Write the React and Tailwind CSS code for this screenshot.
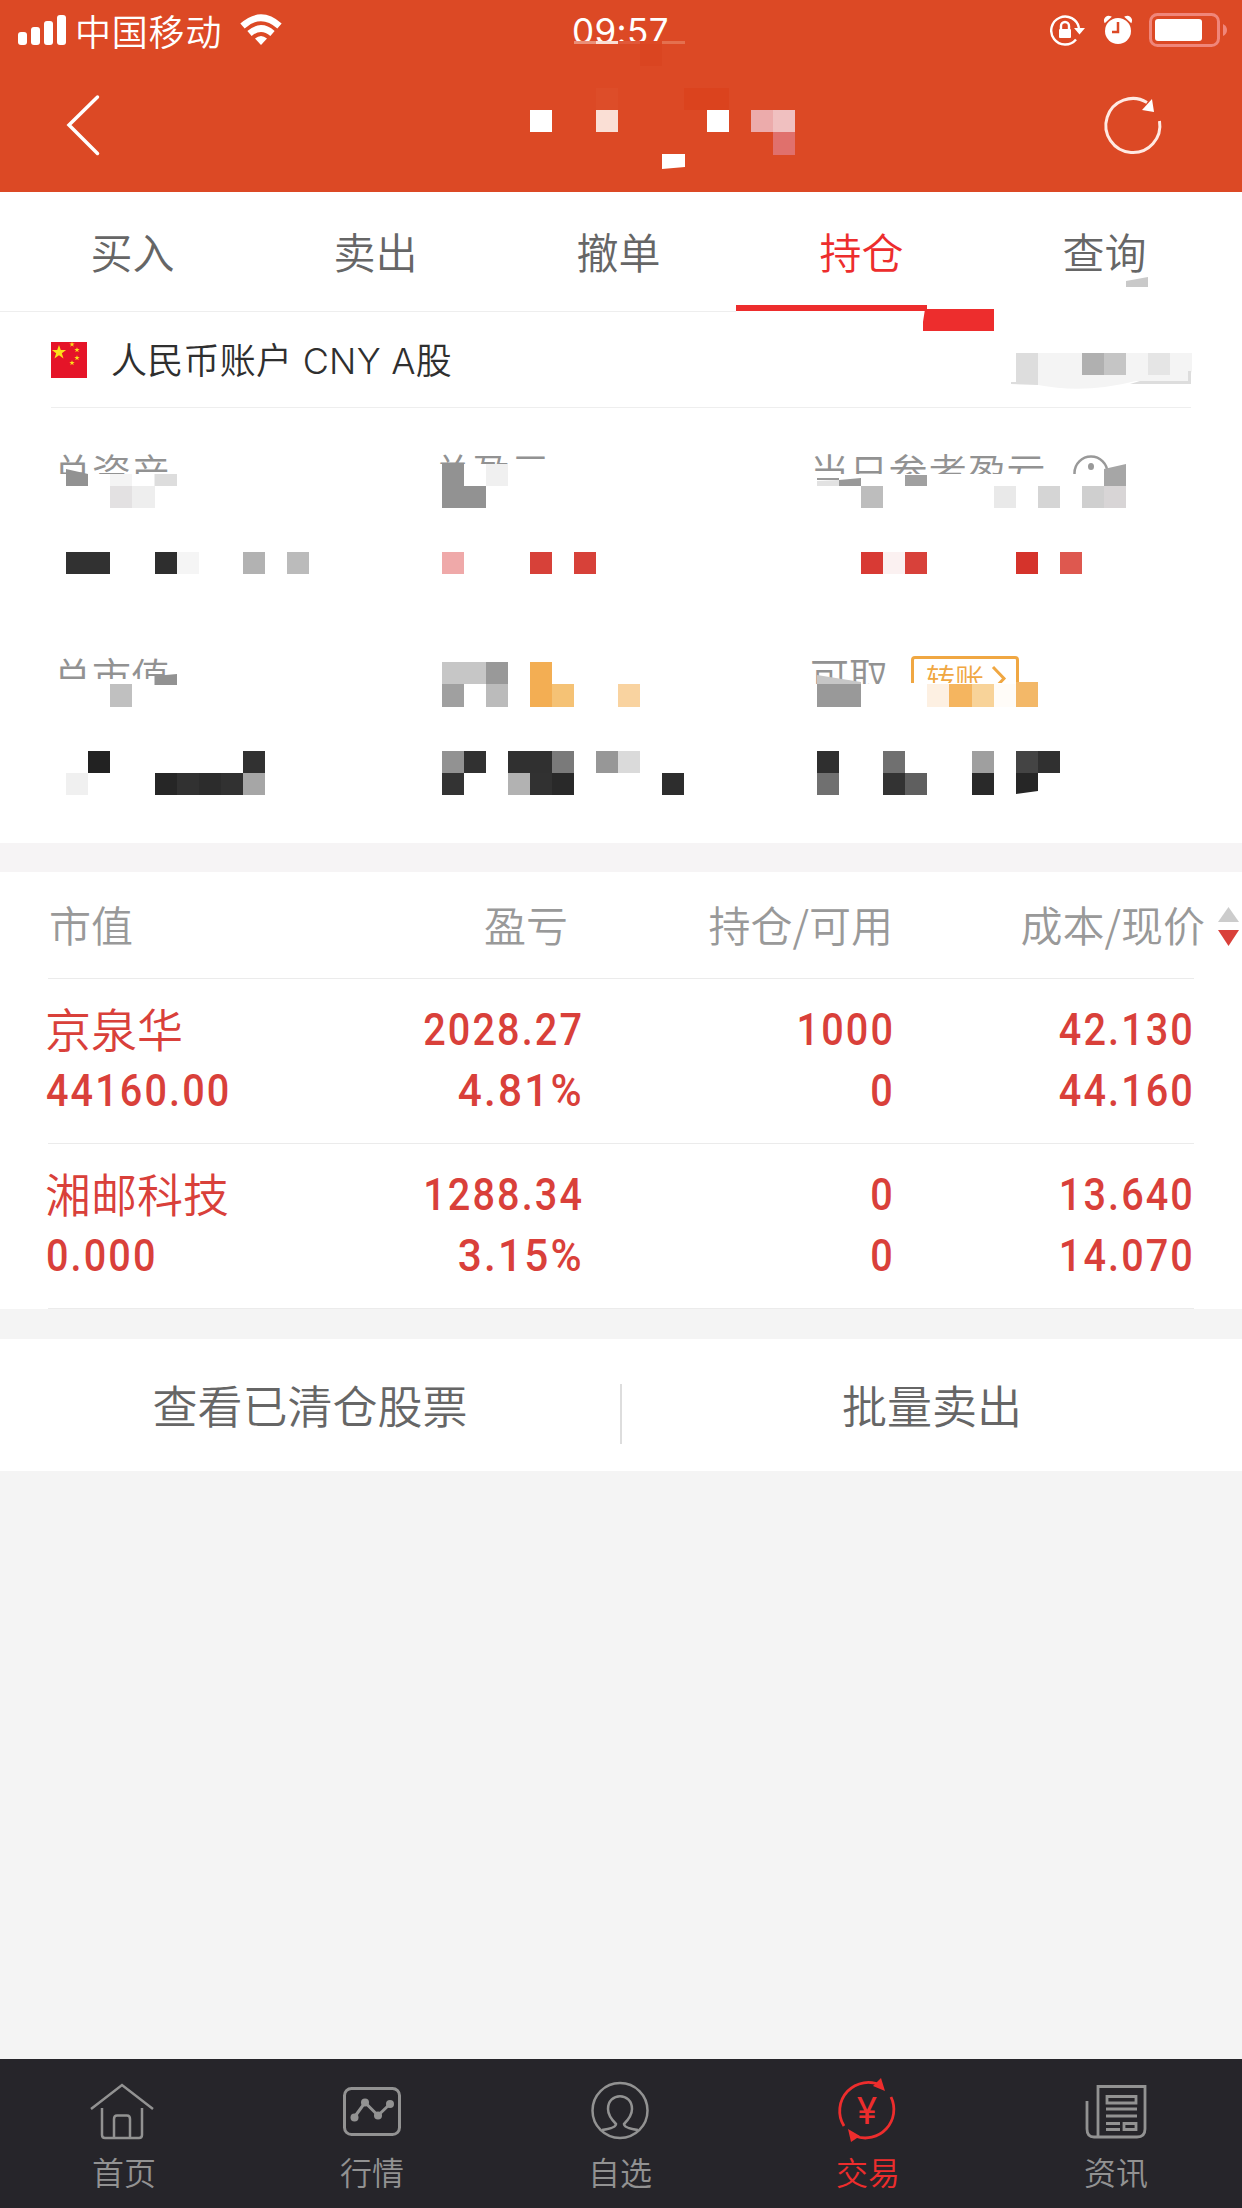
import clsx from 'clsx';

// side of one mosaic block
const CELL = 22.08;

// [column, row, colour, columns wide]
const BLOCKS = [
  [24, 5, '#ffffff'], [27, 5, '#fadfd5'], [32, 5, '#ffffff'], [34, 5, '#ecabab'], [35, 5, '#f0c0c0'],
  [35, 6, '#e0706c'], [31, 4, '#db431e', 2], [27, 4, '#dd4d29'], [29, 2, '#da4521'],

  [20, 21, '#929292'], [22, 21, '#f0f0f0'],
  [5, 22, '#e3e1e2'], [6, 22, '#eeeeee'], [20, 22, '#929292', 2], [39, 22, '#bdbdbd'],
  [45, 22, '#e9e9e9'], [47, 22, '#d5d5d5'], [49, 22, '#cfcfcf'], [50, 22, '#d8d5d6'],

  [3, 25, '#313131', 2], [7, 25, '#2e2e2e'], [8, 25, '#f5f5f5'], [11, 25, '#b2b2b2'], [13, 25, '#bbbbbb'],
  [20, 25, '#efa9a9'], [24, 25, '#d74139'], [26, 25, '#d74139'],
  [39, 25, '#d83a34'], [40, 25, '#fbf1f1'], [41, 25, '#d8413a'], [46, 25, '#d5332b'], [48, 25, '#de584f'],

  [20, 30, '#c6c6c6', 2], [22, 30, '#999999'], [24, 30, '#f3ae53'],
  [5, 31, '#c0c0c0'], [20, 31, '#a0a0a0'], [22, 31, '#bbbbbb'], [24, 31, '#f3ae53'], [25, 31, '#f5c275'],
  [28, 31, '#f9d3a0'], [37, 31, '#999999', 2], [42, 31, '#fdf0e2'], [43, 31, '#f5b55f'], [44, 31, '#f8d399'],
  [45, 31, '#fffcf8'], [46, 31, '#f3b868'],

  [4, 34, '#222222'], [11, 34, '#313131'], [20, 34, '#929292'], [21, 34, '#313131'], [23, 34, '#303030', 2],
  [25, 34, '#7a7a7a'], [27, 34, '#979797'], [28, 34, '#dadada'], [37, 34, '#2f2f2f'], [40, 34, '#707070'],
  [44, 34, '#9f9f9f'], [46, 34, '#444444'], [47, 34, '#303030'],
  [3, 35, '#f0f0f0'], [7, 35, '#262626'], [8, 35, '#313131'], [9, 35, '#2c2c2c'], [10, 35, '#313131'],
  [11, 35, '#a6a6a6'], [20, 35, '#333333'], [23, 35, '#b2b2b2'], [24, 35, '#313131'], [25, 35, '#292929'],
  [30, 35, '#2d2d2d'], [37, 35, '#707070'], [40, 35, '#333333'], [41, 35, '#5f5f5f'], [44, 35, '#292929'],
];

// blocks cut off by the brush edge
const SHARDS = [
  ['662,154 685,154 685,167 662,169', '#ffffff'],
  ['1126,281 1148,277 1148,287 1126,287', '#c9c9c9'],
  ['925,309 994,309 994,331 923,331 923,322', '#ed2d2d'],
  ['66,469 88,474 88,486 66,486', '#929292'],
  ['110,474 132,474 132,486 110,486', '#f4f4f4'],
  ['154.5,474 177,474 177,486 154.5,486', '#dddddd'],
  ['817,481 839,480 839,486 817,486', '#e2e2e2'],
  ['839,480 861,478 861,486 839,486', '#999999'],
  ['817,478 839,478 839,480 817,480', '#999999'],
  ['905,475 927,475 927,486 905,486', '#a0a0a0'],
  ['1104,469 1126,464 1126,486 1104,486', '#a6a6a6'],
  ['154.5,676 177,674 177,685 154.5,685', '#929292'],
  ['817,675 861,682 861,685 817,685', '#c6c6c6'],
  ['1016,682 1038,682 1038,685 1016,685', '#f3b868'],
  ['1016,773 1038,773 1038,791 1016,794', '#262626'],
];

const TABS = ['买入', '卖出', '撤单', '持仓', '查询'];

const HOLDINGS = [
  { name: '京泉华', value: '44160.00', profit: '2028.27', rate: '4.81%', amount: '1000', usable: '0', cost: '42.130', price: '44.160' },
  { name: '湘邮科技', value: '0.000', profit: '1288.34', rate: '3.15%', amount: '0', usable: '0', cost: '13.640', price: '14.070' },
];

function Mosaic() {
  return (
    <svg className="absolute left-0 top-0 pointer-events-none" width="1242" height="840" viewBox="0 0 1242 840">
      <g fill="#f4f4f4">
        <path d="M1038 353H1192V371L1188 381H1136Q1085 394 1038 385Z" />
        <path d="M1016 353H1038V385L1011 384V382H1016Z" fill="#dddddd" />
        <path d="M1082 353H1104V375H1082Z" fill="#b0b0b0" />
        <path d="M1104 353H1126V375H1104Z" fill="#c5c5c5" />
        <path d="M1148 353H1170V375H1148Z" fill="#e5e5e5" />
        <path d="M1130 384L1140 381H1188V371H1191V384Z" fill="#dddddd" />
      </g>
      {SHARDS.map(([points, fill]) => <polygon key={points} points={points} fill={fill} />)}
      <g shapeRendering="crispEdges">
        {BLOCKS.map(([col, row, fill, span = 1]) => (
          <rect key={`${col}-${row}`} x={col * CELL} y={row * CELL} width={CELL * span} height={CELL} fill={fill} />
        ))}
        <rect x="574" y="41" width="22" height="3" fill="#ea8f78" />
        <rect x="596" y="41" width="22" height="3" fill="#fadfd5" />
        <rect x="618" y="41" width="22" height="3" fill="#e0593a" />
        <rect x="662" y="41" width="23" height="3" fill="#e4704f" />
      </g>
    </svg>
  );
}

function StatusBar() {
  return (
    <div className="flex h-[62px] items-center text-white">
      <svg className="ml-[18px]" width="48" height="62" fill="currentColor">
        <rect x="0" y="32" width="9" height="13" rx="3" />
        <rect x="13" y="27" width="9" height="18" rx="3" />
        <rect x="26" y="21" width="9" height="24" rx="3" />
        <rect x="39" y="15" width="9" height="30" rx="3" />
      </svg>
      <span className="ml-[9px] mt-[-3px] w-[165px] text-[36px] font-[350] leading-[62px] tracking-[0.8px]">中国移动</span>
      <svg width="42" height="62" fill="none" stroke="currentColor" strokeWidth="6.5">
        <path d="M2.5 26Q21 9.500 39.500 26" />
        <path d="M9.500 33.500Q21 23.500 32.500 33.500" />
        <path d="M15 38.500Q21 33.500 27 38.500L21 45Z" fill="currentColor" stroke="none" />
      </svg>
      <div className="ml-[290px] h-[41px] w-[110px] self-start overflow-hidden font-['Inter'] text-[35px] leading-[62px] tracking-[0.4px]">09:57</div>
      <svg className="ml-[368px]" width="36" height="62" fill="none" stroke="currentColor" strokeWidth="2.400">
        <path d="M26 39.500A14 14 0 1 1 29 28" />
        <path d="M24 28H35L29.500 34.500Z" fill="currentColor" stroke="none" />
        <rect x="9" y="29" width="12" height="9" rx="1" fill="currentColor" stroke="none" />
        <path d="M11 29V26A4 4 0 0 1 19 26V29" />
      </svg>
      <svg className="ml-[17px]" width="30" height="62" fill="currentColor">
        <circle cx="15" cy="31" r="13" />
        <path d="M2 22A4 4 0 0 1 7.500 17ZM28 22A4 4 0 0 0 22.500 17Z" stroke="currentColor" strokeWidth="1.500" />
        <path d="M15 22V32H9" fill="none" stroke="#dc4925" strokeWidth="2.500" />
      </svg>
      <svg className="ml-[16px]" width="80" height="62">
        <rect x="1.500" y="14.500" width="68" height="31" rx="7" fill="none" stroke="#f0867a" strokeWidth="3" />
        <rect x="6" y="19" width="47" height="22" rx="3" fill="white" />
        <path d="M74 24Q78 26 78 30T74 36Z" fill="#f0867a" />
      </svg>
    </div>
  );
}

function NavBar() {
  return (
    <div className="flex h-[130px] items-start justify-between pl-[64px] pr-[76px] pt-[30px]">
      <svg width="40" height="66" fill="none" stroke="white" strokeWidth="3.500" strokeLinecap="round">
        <path d="M33.500 5L5 33L33.500 61.500" />
      </svg>
      <svg width="66" height="68" fill="none" stroke="#ffe9e2" strokeWidth="3">
        <path d="M59.500 29A27 27 0 1 1 47 10.500" />
        <path d="M42 18L52 7L54 20Z" fill="#ffffff" stroke="none" />
      </svg>
    </div>
  );
}

function Tabs() {
  return (
    <div className="h-[120px] bg-white">
      <div className="flex h-[119px] pl-[11px]">
        {TABS.map(tab => (
          <div key={tab} className="flex w-[243px] flex-col items-center text-[42px]">
            <span className={clsx('mt-[25px] h-[89px] font-[350] leading-[68px]', tab === '持仓' ? 'text-[#ed2d2d]' : 'text-[#666666]')}>{tab}</span>
            {tab === '持仓' && <div className="h-[6px] w-[191px] flex-shrink-0 -translate-x-[30px] bg-[#ed2d2d]" />}
          </div>
        ))}
      </div>
      <div className="h-px w-[736px] bg-[#eeeeee]" />
    </div>
  );
}

function Flag() {
  const star = 'M0 -10L2.400 -3.200H9.500L3.800 1L6 8L0 3.800L-6 8L-3.800 1L-9.500 -3.200H-2.400Z';
  return (
    <svg width="36" height="36" fill="#fbe01a">
      <rect width="36" height="36" fill="#e51428" />
      <path d={star} transform="translate(8 10.500) scale(.75)" />
      <path d={star} transform="translate(21 2.500) scale(.28)" />
      <path d={star} transform="translate(26 8) scale(.28)" />
      <path d={star} transform="translate(26 16) scale(.28)" />
      <path d={star} transform="translate(21 21) scale(.28)" />
    </svg>
  );
}

function Summary() {
  return (
    <div className="grid h-[435px] grid-cols-[380px_377px_1fr] grid-rows-[204px_231px] bg-white pl-[53px] text-[39px] font-[350] leading-[51px] text-[#929292]">
      <div className="mt-[37px] h-[29px] overflow-hidden">总资产</div>
      <div className="mt-[37px] h-[19px] overflow-hidden">总盈亏</div>
      <div className="mt-[37px] flex h-[29px] items-start overflow-hidden">
        <span className="tracking-[0.3px]">当日参考盈亏</span>
        <svg className="ml-[24px] mt-[8px] flex-shrink-0" width="40" height="40" fill="none" stroke="#999999" strokeWidth="2.500">
          <circle cx="21" cy="20" r="16.500" />
          <ellipse cx="21" cy="13.500" rx="3" ry="3.500" fill="#999999" stroke="none" />
        </svg>
      </div>
      <div className="mt-[37px] h-[30px] overflow-hidden">总市值</div>
      <div />
      <div className="mt-[37px] flex h-[35px] items-start overflow-hidden">
        <span>可取</span>
        <div className="ml-[23px] mt-[7px] h-[27px] overflow-hidden">
          <div className="flex h-[46px] w-[108px] items-start rounded-[4px] border-[3px] border-[#f0a742] pl-[12px] text-[29px] leading-[37px] text-[#f0a742]">
            转账
            <svg className="ml-[6px] mt-[5px]" width="18" height="28" fill="none" stroke="currentColor" strokeWidth="3">
              <path d="M3 3L14 14.500L3 26" />
            </svg>
          </div>
        </div>
      </div>
    </div>
  );
}

// narrow, widely spaced digits
const NUMBER = "font-['Roboto'] text-[45px] font-medium leading-[61px] tracking-[2.4px]";

function Cell({ top, bottom, className }) {
  return (
    <div className={clsx('flex flex-col pt-[20px] text-right', className)}>
      <span className={clsx(NUMBER, 'origin-right scale-x-[.88]')}>{top}</span>
      <span className={clsx(NUMBER, 'origin-right', bottom.endsWith('%') ? 'scale-x-[.94]' : 'scale-x-[.88]')}>{bottom}</span>
    </div>
  );
}

function Holdings() {
  return (
    <div className="bg-white">
      <div className="flex h-[106px] pl-[49px] text-[42px] font-[350] leading-[104px] text-[#999999]">
        <span className="w-[217px]">市值</span>
        <span className="w-[302px] text-right">盈亏</span>
        <span className="w-[325px] text-right">持仓/可用</span>
        <span className="w-[312px] text-right">成本/现价</span>
        <svg className="ml-[13px] mt-[34px]" width="22" height="42">
          <path d="M0 16L10.500 1L21 16Z" fill="#cccccc" />
          <path d="M0 24H21L10.500 40Z" fill="#d9403a" />
        </svg>
      </div>
      <div className="ml-[48px] h-px w-[1146px] bg-[#ebebeb]" />
      {HOLDINGS.map(h => (
        <div key={h.name}>
          <div className="flex h-[164px] text-[#d9403a]">
            <div className="flex w-[281px] flex-col pl-[45px] pt-[18px]">
              <span className="h-[63px] whitespace-nowrap text-[46px] font-[350] leading-[61px]">{h.name}</span>
              <span className={clsx(NUMBER, 'origin-left translate-x-px scale-x-[.88]')}>{h.value}</span>
            </div>
            <Cell className="w-[303px]" top={h.profit} bottom={h.rate} />
            <Cell className="w-[311px]" top={h.amount} bottom={h.usable} />
            <Cell className="w-[300px]" top={h.cost} bottom={h.price} />
          </div>
          <div className="ml-[48px] h-px w-[1146px] bg-[#ebebeb]" />
        </div>
      ))}
    </div>
  );
}

const ICONS = {
  home: (
    <svg className="-translate-x-[2px]" width="66" height="66" fill="none" stroke="currentColor" strokeWidth="2.500">
      <path d="M2 33L33 9L64 33M13 32V59Q13 62 16 62H50Q53 62 53 59V32M25 62V43Q25 39.500 28 39.500H38Q41 39.500 41 43V62" />
    </svg>
  ),
  chart: (
    <svg width="66" height="66" fill="none" stroke="currentColor" strokeWidth="3">
      <rect x="5.500" y="12.500" width="55" height="46" rx="7" />
      <path d="M15.500 41L26 26.500L39 39.500L51 28" />
      <g fill="currentColor" stroke="none">
        <circle cx="15.500" cy="41.500" r="4" /><circle cx="26" cy="26.500" r="4" />
        <circle cx="39" cy="39.500" r="4" /><circle cx="51" cy="28" r="4" />
      </g>
    </svg>
  ),
  person: (
    <svg width="66" height="66" fill="none" stroke="currentColor" strokeWidth="2.500">
      <circle cx="33" cy="34.500" r="27.500" />
      <path d="M15 54Q29 52 29 48C24 43 21 38 21 33C21 16 45 16 45 33C45 38 42 43 37 48Q37 52 51 54" />
    </svg>
  ),
  trade: (
    <svg className="-translate-x-px" width="66" height="70" fill="none" stroke="currentColor" strokeWidth="2.800">
      <path d="M10 50A28.500 28.500 0 0 1 48 10M57 21A28.500 28.500 0 0 1 21 60" />
      <path d="M39 10L47 2L51 15ZM14 53L17 66L26 60Z" fill="currentColor" stroke="none" />
      <text className="font-['Inter']" x="33" y="48" textAnchor="middle" fontSize="37" fontWeight="400" fill="currentColor" stroke="none">¥</text>
    </svg>
  ),
  news: (
    <svg className="translate-x-px" width="66" height="66" fill="none" stroke="currentColor" strokeWidth="2.800">
      <path d="M14 60V10.500H61V53Q61 61 53 61H10Q3 61 3 53V25" />
      <path d="M23 20.500H52V27H23ZM22 33H53M22 40H53M22 47.500H36M22 53.500H36M40 47.500H52V53.500H40Z" />
    </svg>
  ),
};

const NAV = [
  { label: '首页', icon: 'home' },
  { label: '行情', icon: 'chart' },
  { label: '自选', icon: 'person' },
  { label: '交易', icon: 'trade', active: true },
  { label: '资讯', icon: 'news' },
];

export default function App() {
  return (
    <div className="relative flex h-[2208px] w-[1242px] flex-col overflow-hidden bg-[#f4f4f4] font-['Noto_Sans_CJK_SC',sans-serif]">
      <header className="h-[192px] flex-shrink-0 bg-[#dc4925]">
        <StatusBar />
        <NavBar />
      </header>
      <Tabs />
      <div className="h-[96px] bg-white px-[51px]">
        <div className="flex h-[95px] items-center gap-[24px] text-[36px] font-[350] text-[#2f2f2f]">
          <Flag />
          <span className="mt-[2px] font-['Inter','Noto_Sans_CJK_SC',sans-serif] tracking-[0.25px]">人民币账户 CNY A股</span>
        </div>
        <div className="h-px bg-[#eeeeee]" />
      </div>
      <Summary />
      <div className="h-[29px] bg-[#f6f4f5]" />
      <Holdings />
      <div className="mt-[30px] flex h-[132px] items-center bg-white text-[45px] font-[350] text-[#666666]">
        <span className="flex-1 text-center">查看已清仓股票</span>
        <div className="mt-[18px] h-[60px] w-[2px] bg-[#dddddd]" />
        <span className="flex-1 text-center">批量卖出</span>
      </div>
      <nav className="mt-auto flex h-[149px] bg-[#26252a] pr-[2px]">
        {NAV.map(item => (
          <div key={item.label} className={clsx('flex flex-1 flex-col items-center pt-[17px]', item.active ? 'text-[#ed2d2d]' : 'text-[#929292]')}>
            <div className="h-[69px]">{ICONS[item.icon]}</div>
            <span className="text-[32px] font-[350] leading-[52px]">{item.label}</span>
          </div>
        ))}
      </nav>
      <Mosaic />
    </div>
  );
}
